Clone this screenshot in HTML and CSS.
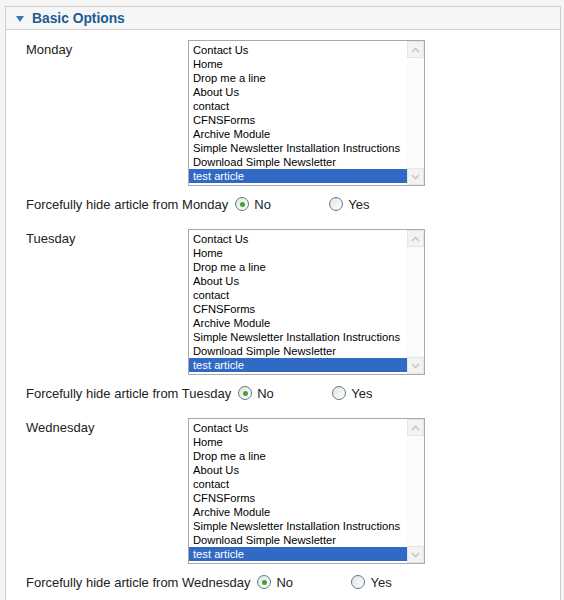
FILE: index.html
```html
<!DOCTYPE html>
<html>
<head>
<meta charset="utf-8">
<link rel="stylesheet" href="styles.css">
</head>
<body>
<div class="panel">
  <div class="panel-head">
    <span class="tri"></span>
    <span class="title">Basic Options</span>
  </div>
  <div class="panel-body">
    <div class="day">
      <div class="field">
        <div class="label">Monday</div>
        <div class="listbox">
          <div class="items">
            <div class="item">Contact Us</div>
            <div class="item">Home</div>
            <div class="item">Drop me a line</div>
            <div class="item">About Us</div>
            <div class="item">contact</div>
            <div class="item">CFNSForms</div>
            <div class="item">Archive Module</div>
            <div class="item">Simple Newsletter Installation Instructions</div>
            <div class="item">Download Simple Newsletter</div>
            <div class="item sel">test article</div>
          </div>
          <div class="scroll">
            <div class="btn"><svg width="9" height="6" viewBox="0 0 9 6"><path d="M1 5 L4.5 1.5 L8 5" fill="none" stroke="#c9c9c3" stroke-width="1.6"/></svg></div>
            <div class="track"></div>
            <div class="btn"><svg width="9" height="6" viewBox="0 0 9 6"><path d="M1 1 L4.5 4.5 L8 1" fill="none" stroke="#c9c9c3" stroke-width="1.6"/></svg></div>
          </div>
        </div>
      </div>
      <div class="hide">
        <span class="hide-label">Forcefully hide article from Monday</span>
        <span class="opt opt-no"><span class="radio on"></span>No</span>
        <span class="opt"><span class="radio"></span>Yes</span>
      </div>
    </div>

    <div class="day">
      <div class="field">
        <div class="label">Tuesday</div>
        <div class="listbox">
          <div class="items">
            <div class="item">Contact Us</div>
            <div class="item">Home</div>
            <div class="item">Drop me a line</div>
            <div class="item">About Us</div>
            <div class="item">contact</div>
            <div class="item">CFNSForms</div>
            <div class="item">Archive Module</div>
            <div class="item">Simple Newsletter Installation Instructions</div>
            <div class="item">Download Simple Newsletter</div>
            <div class="item sel">test article</div>
          </div>
          <div class="scroll">
            <div class="btn"><svg width="9" height="6" viewBox="0 0 9 6"><path d="M1 5 L4.5 1.5 L8 5" fill="none" stroke="#c9c9c3" stroke-width="1.6"/></svg></div>
            <div class="track"></div>
            <div class="btn"><svg width="9" height="6" viewBox="0 0 9 6"><path d="M1 1 L4.5 4.5 L8 1" fill="none" stroke="#c9c9c3" stroke-width="1.6"/></svg></div>
          </div>
        </div>
      </div>
      <div class="hide">
        <span class="hide-label">Forcefully hide article from Tuesday</span>
        <span class="opt opt-no"><span class="radio on"></span>No</span>
        <span class="opt"><span class="radio"></span>Yes</span>
      </div>
    </div>

    <div class="day">
      <div class="field">
        <div class="label">Wednesday</div>
        <div class="listbox">
          <div class="items">
            <div class="item">Contact Us</div>
            <div class="item">Home</div>
            <div class="item">Drop me a line</div>
            <div class="item">About Us</div>
            <div class="item">contact</div>
            <div class="item">CFNSForms</div>
            <div class="item">Archive Module</div>
            <div class="item">Simple Newsletter Installation Instructions</div>
            <div class="item">Download Simple Newsletter</div>
            <div class="item sel">test article</div>
          </div>
          <div class="scroll">
            <div class="btn"><svg width="9" height="6" viewBox="0 0 9 6"><path d="M1 5 L4.5 1.5 L8 5" fill="none" stroke="#c9c9c3" stroke-width="1.6"/></svg></div>
            <div class="track"></div>
            <div class="btn"><svg width="9" height="6" viewBox="0 0 9 6"><path d="M1 1 L4.5 4.5 L8 1" fill="none" stroke="#c9c9c3" stroke-width="1.6"/></svg></div>
          </div>
        </div>
      </div>
      <div class="hide">
        <span class="hide-label">Forcefully hide article from Wednesday</span>
        <span class="opt opt-no"><span class="radio on"></span>No</span>
        <span class="opt"><span class="radio"></span>Yes</span>
      </div>
    </div>
  </div>
</div>
</body>
</html>
```

FILE: styles.css
```css
html, body {
  margin: 0;
  padding: 0;
  background: #f5f5f5;
}
body {
  padding: 6px 3px 0 5px;
  font-family: "Liberation Sans", Arial, sans-serif;
  font-size: 13px;
  color: #222;
  height: 600px;
  overflow: hidden;
}
.panel {
  border: 1px solid #d0d0d0;
  border-bottom: none;
  background: #fff;
  height: 620px;
}
.panel-head {
  height: 22px;
  background: #f6f6f6;
  border-bottom: 1px solid #cfcfcf;
  display: flex;
  align-items: center;
  padding-left: 10px;
}
.tri {
  width: 0;
  height: 0;
  border-left: 4.5px solid transparent;
  border-right: 4.5px solid transparent;
  border-top: 6px solid #3a78bd;
  margin-right: 8px;
  margin-top: 1px;
}
.title {
  font-weight: bold;
  font-size: 13.8px;
  color: #1d5b94;
}
.panel-body {
  padding: 10px 0 0 20px;
}
.day {
  display: flex;
  flex-direction: column;
}
.field {
  display: flex;
}
.label {
  width: 162px;
  padding-top: 3px;
  line-height: 14px;
  color: #222;
}
.listbox {
  width: 235px;
  height: 144px;
  border: 1px solid #a9a9a9;
  display: flex;
  background: #fff;
}
.items {
  flex: 1;
  padding-top: 2px;
  font-size: 11.2px;
  line-height: 14px;
  color: #000;
}
.item {
  height: 14px;
  padding-left: 4px;
  white-space: nowrap;
}
.item.sel {
  background: #316ac5;
  color: #fff;
}
.scroll {
  width: 17px;
  display: flex;
  flex-direction: column;
  background: #fbfbf9;
}
.btn {
  height: 17px;
  box-sizing: border-box;
  border: 1px solid #e6e6e0;
  background: #f3f3ef;
  display: flex;
  align-items: center;
  justify-content: center;
}
.track {
  flex: 1;
}
.hide {
  display: flex;
  align-items: center;
  height: 20px;
  margin-top: 8px;
  margin-bottom: 15px;
  white-space: nowrap;
}
.hide-label {
  margin-right: 7px;
}
.opt {
  display: inline-flex;
  align-items: center;
}
.opt-no {
  width: 94px;
}
.radio {
  width: 12px;
  height: 12px;
  border: 1px solid #5b7895;
  border-radius: 50%;
  background: linear-gradient(135deg, #e4e4dc, #ffffff);
  margin-right: 5px;
  position: relative;
  box-sizing: content-box;
}
.radio.on::after {
  content: "";
  position: absolute;
  left: 3.5px;
  top: 3.5px;
  width: 5px;
  height: 5px;
  border-radius: 50%;
  background: #3aa43a;
}
```
